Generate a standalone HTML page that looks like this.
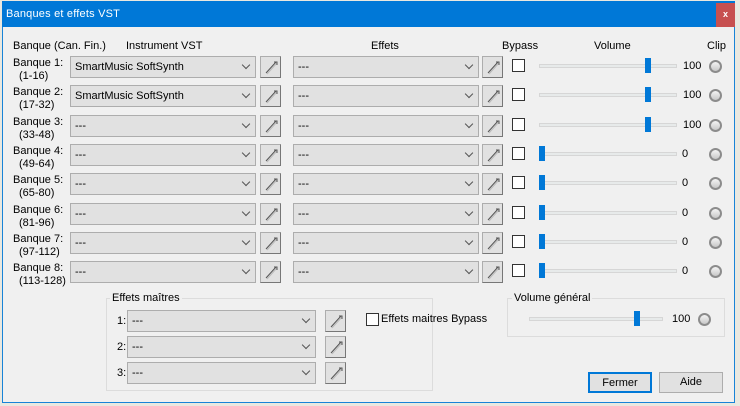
<!DOCTYPE html>
<html><head><meta charset="utf-8"><style>
*{box-sizing:border-box;margin:0;padding:0}
body{width:740px;height:406px;background:#e9e8e0;font-family:"Liberation Sans",sans-serif;font-size:11px;color:#000;position:relative;overflow:hidden}
.a{position:absolute}
.win{left:2px;top:1px;width:733px;height:402px;background:#f0f0f0;border:1px solid #1883d7}
.tb{left:2px;top:1px;width:733px;height:26px;background:#0078d7;color:#fff;font-size:11px;padding:7px 0 0 4px;letter-spacing:0.2px}
.cls{left:716px;top:3px;width:19px;height:24px;background:#c75050;color:#fff;font-size:9px;text-align:center;line-height:22px;font-weight:bold}
.cb{height:22px;background:#e1e1e1;border:1px solid #adadad;padding:4px 0 0 4px;font-size:11px}
.cb:after{content:"";position:absolute;right:6px;top:5px;width:5px;height:5px;border-right:1px solid #555;border-bottom:1px solid #555;transform:rotate(45deg)}
.pb{width:21px;height:22px;background:#e1e1e1;border:1px solid #adadad;border-right-color:#777;border-bottom-color:#777}
.chk{width:13px;height:13px;border:1px solid #333;background:#fff}
.trk{height:4px;background:#e7eaea;border:1px solid #d6d6d6}
.th{width:6px;height:15px;background:#0078d7}
.led{width:13px;height:13px;border-radius:50%;border:2px solid #8c8c8c;background:linear-gradient(#f4f4f4,#c8c8c8)}
.grp{border:1px solid #dcdcdc}
.lg{background:#f0f0f0;padding:0 2px}
.btn{height:21px;background:#e1e1e1;border:1px solid #adadad;text-align:center;line-height:19px}
</style></head><body>
<div class="a win"></div>
<div class="a tb">Banques et effets VST</div>
<div class="a cls">x</div>
<div class="a" style="left:13px;top:40px">Banque (Can. Fin.)</div>
<div class="a" style="left:126px;top:40px">Instrument VST</div>
<div class="a" style="left:371px;top:40px">Effets</div>
<div class="a" style="left:502px;top:40px">Bypass</div>
<div class="a" style="left:594px;top:40px">Volume</div>
<div class="a" style="left:707px;top:40px">Clip</div>
<div id="rows"></div>
<div class="a grp" style="left:106px;top:298px;width:327px;height:93px"></div>
<div class="a lg" style="left:110px;top:292px">Effets maîtres</div>
<div class="a grp" style="left:507px;top:298px;width:218px;height:39px"></div>
<div class="a lg" style="left:512px;top:292px">Volume général</div>
<div class="a trk" style="left:529px;top:317px;width:134px"></div>
<div class="a th" style="left:634px;top:311px"></div>
<div class="a" style="left:672px;top:313px">100</div>
<div class="a led" style="left:698px;top:313px"></div>
<div class="a chk" style="left:366px;top:313px"></div>
<div class="a" style="left:381px;top:313px">Effets maitres Bypass</div>
<div class="a btn" style="left:588px;top:372px;width:64px;border:2px solid #0078d7">Fermer</div>
<div class="a btn" style="left:659px;top:372px;width:64px">Aide</div>
<script>
var P='<svg width="19" height="20" style="position:absolute;left:0;top:0"><path d="M5 16 L15 5" stroke="#555" stroke-width="1"/><path d="M6 17 L16 6" stroke="#bbb" stroke-width="1"/><path d="M13 5 L16 5 L16 8" stroke="#555" fill="none" stroke-width="1"/></svg>';
var h='';
var ranges=['(1-16)','(17-32)','(33-48)','(49-64)','(65-80)','(81-96)','(97-112)','(113-128)'];
for(var i=0;i<8;i++){
 var y=Math.round(56+i*29.3);
 var full=i<3;
 h+='<div class="a" style="left:13px;top:'+(y+1)+'px">Banque '+(i+1)+':</div>';
 h+='<div class="a" style="left:19px;top:'+(y+14)+'px">'+ranges[i]+'</div>';
 h+='<div class="a cb" style="left:70px;top:'+y+'px;width:186px">'+(i<2?'SmartMusic SoftSynth':'---')+'</div>';
 h+='<div class="a pb" style="left:260px;top:'+y+'px">'+P+'</div>';
 h+='<div class="a cb" style="left:293px;top:'+y+'px;width:186px">---</div>';
 h+='<div class="a pb" style="left:482px;top:'+y+'px">'+P+'</div>';
 h+='<div class="a chk" style="left:512px;top:'+(y+3)+'px"></div>';
 h+='<div class="a trk" style="left:539px;top:'+(y+8)+'px;width:138px"></div>';
 h+='<div class="a th" style="left:'+(full?645:539)+'px;top:'+(y+2)+'px"></div>';
 h+='<div class="a" style="left:'+(full?683:682)+'px;top:'+(y+4)+'px">'+(full?'100':'0')+'</div>';
 h+='<div class="a led" style="left:709px;top:'+(y+4)+'px"></div>';
}
for(var j=0;j<3;j++){
 var y=310+j*26;
 h+='<div class="a" style="left:117px;top:'+(y+5)+'px">'+(j+1)+':</div>';
 h+='<div class="a cb" style="left:127px;top:'+y+'px;width:189px">---</div>';
 h+='<div class="a pb" style="left:325px;top:'+y+'px">'+P+'</div>';
}
document.getElementById('rows').innerHTML=h;
</script>
</body></html>
